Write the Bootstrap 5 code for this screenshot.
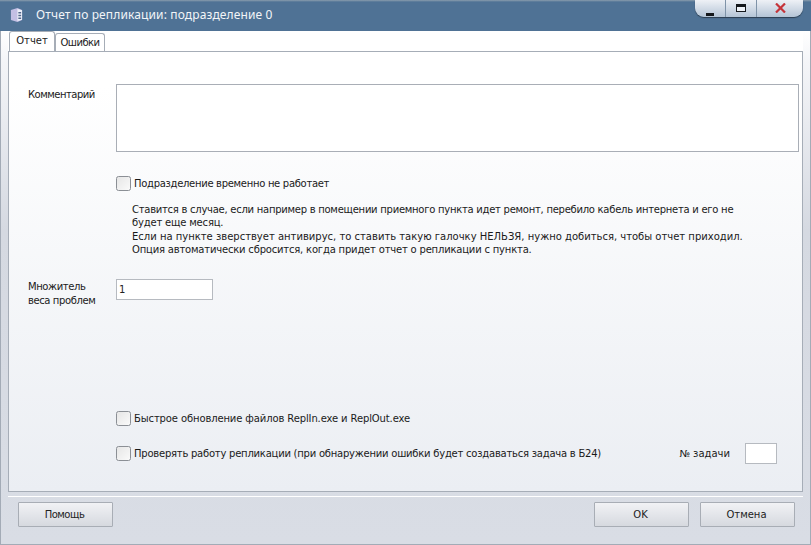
<!DOCTYPE html>
<html lang="ru">
<head>
<meta charset="utf-8">
<title>Отчет по репликации</title>
<link href="https://cdn.jsdelivr.net/npm/bootstrap@5.3.0/dist/css/bootstrap.min.css" rel="stylesheet">
<style>
html,body{height:545px;overflow:hidden}
body{font-family:"DejaVu Sans",sans-serif;font-size:10px;color:#1a1a1a;background:#d9dde5}
.win{height:545px;border:1px solid #a3abb6;display:flex;flex-direction:column;background:linear-gradient(#fff 30px,#f4f5f8 60px,#d5d9e1 230px,#d9dde5 100%)}
.tbar{height:31px;margin:-1px -1px 0;background:linear-gradient(#8a9dae 0,#4f7295 2px,#4f7295 100%);color:#f2f5f8;font-family:"Noto Sans",sans-serif;font-size:12px;letter-spacing:.13px;flex:none;padding-left:10px}
.tbar-title{margin-left:13px;margin-top:-1px}
.wctl{width:108px;height:17px;margin-right:8px;border-radius:0 0 9px 9px;background:linear-gradient(#eef1f6,#b4c4d6);box-shadow:0 1px 1px #2c3e50;overflow:hidden}
.wbtn{height:17px;border-right:1px solid #7f93a8;padding-bottom:1px}
.wbtn:last-child{border-right:0}
.wmin{width:31px}.wmax{width:31px}.wcl{width:46px}
.tabs-area{margin:0 7px;flex:none;height:21px;background:#fff}
.tabs-area.nav-tabs{border-bottom:1px solid #a6adb7;padding-left:1px}
.tabs-area .nav-link{font-size:10px;color:#222;padding:0;border:1px solid #a6adb7;border-bottom:0;border-radius:3px 3px 0 0;margin:0;background:#fff;text-align:center}
.tabs-area .nav-link.tab-on{color:#222;background:#fff;border-color:#a6adb7;padding-top:1px}
.tab-on{width:46px;height:20px;line-height:15px}
.tabs-area .tab-off{width:50px;height:18px;margin-top:2px;line-height:18px;letter-spacing:-.5px}
.pane{margin:0 7px;flex:none;height:440px;border:1px solid #a6adb7;border-top:0;background:linear-gradient(#fff 0,#fff 8%,#ebeef3 100%);padding-left:19px;padding-right:3px}
.lbl{width:88px;flex:none;line-height:14px;letter-spacing:-.4px;padding-top:1px}
.cmt{height:68px;margin-top:32px}
.cmt .lbl{padding-top:4px;letter-spacing:-.5px}
.area{height:68px;border:1px solid #a9aeb6;border-radius:0;background:#fff;resize:none;box-shadow:none;flex:1}
.chk{width:15px;height:15px;flex:none;margin:0;border:1px solid #8b8f95;border-radius:2px;background:linear-gradient(135deg,#e6e6e6,#fafafa)}
.chkrow{margin-left:88px;height:15px;gap:3px}
.c1{margin-top:24px;letter-spacing:-.3px}
.note{margin:12px 0 0 104px;line-height:13.3px;white-space:nowrap}
.n1{letter-spacing:-.26px}.n2{letter-spacing:-.18px}.n4{letter-spacing:-.19px}
.mult{margin-top:23px}
.num{width:97px;height:21px;border:1px solid #b6bac0;border-radius:0;padding:0 2px;font-size:10px;box-shadow:none;color:#222}
.c2{margin-top:103px;letter-spacing:-.12px}
.c3row{margin-top:17px;height:21px;margin-left:88px;padding-right:22px;gap:3px}
.c3lbl{letter-spacing:-.23px}
.task{width:32px;margin-left:12px}
.dbl{height:5px;margin:0 7px;flex:none;border-bottom:1px solid #fff}
.foot{padding:5px 15px 0 17px;flex:none}
.wbt{width:95px;height:25px;padding:0 2px 0 0;font-size:10px;color:#222;border:1px solid #a8adb5;border-radius:1px;background:linear-gradient(#f1f2f5,#d6d9df)}
.bgap{margin-left:11px}
.tight{letter-spacing:-.5px}
</style>
</head>
<body>
<div class="win">
  <div class="tbar d-flex align-items-start">
    <svg class="mt-2" width="13" height="14" viewBox="0 0 14 15"><path d="M1 2 8 0l5 2v11l-5 2-7-2z" fill="#c3bfe4"/><path d="M8 1v13l5-1.5V2.5z" fill="#eef0fa"/><path d="M9 5h3M9 8h3M9 11h3" stroke="#55688c" stroke-width="1.5"/></svg>
    <div class="tbar-title align-self-center">Отчет по репликации: подразделение 0</div>
    <div class="wctl ms-auto d-flex">
      <div class="wbtn wmin d-flex justify-content-center align-items-end"><svg width="8" height="7" viewBox="0 0 8 7"><rect y="4" width="8" height="3" fill="#15181c"/></svg></div>
      <div class="wbtn wmax d-flex justify-content-center align-items-center"><svg width="10" height="9" viewBox="0 0 10 9"><rect x=".5" y=".5" width="9" height="7" fill="#eef2f7" stroke="#15181c"/><rect width="10" height="3" fill="#15181c"/></svg></div>
      <div class="wbtn wcl d-flex justify-content-center align-items-center"><svg width="11" height="10" viewBox="0 0 11 10"><path d="M1 0.5 10 9.5M10 0.5 1 9.5" stroke="#c5343a" stroke-width="2.2"/></svg></div>
    </div>
  </div>
  <ul class="nav nav-tabs tabs-area">
    <li class="nav-item"><a class="nav-link active tab-on" href="#">Отчет</a></li>
    <li class="nav-item"><a class="nav-link tab-off" href="#">Ошибки</a></li>
  </ul>
  <div class="pane">
    <div class="d-flex cmt">
      <div class="lbl">Комментарий</div>
      <textarea class="form-control area"></textarea>
    </div>
    <div class="d-flex align-items-center chkrow c1">
      <input type="checkbox" class="form-check-input chk" id="a">
      <label for="a">Подразделение временно не работает</label>
    </div>
    <div class="note">
      <div class="n1">Ставится в случае, если например в помещении приемного пункта идет ремонт, перебило кабель интернета и его не</div>
      <div class="n2">будет еще месяц.</div>
      <div>Если на пункте зверствует антивирус, то ставить такую галочку НЕЛЬЗЯ, нужно добиться, чтобы отчет приходил.</div>
      <div class="n4">Опция автоматически сбросится, когда придет отчет о репликации с пункта.</div>
    </div>
    <div class="d-flex mult">
      <div class="lbl">Множитель<br>веса проблем</div>
      <input class="form-control num" value="1">
    </div>
    <div class="d-flex align-items-center chkrow c2">
      <input type="checkbox" class="form-check-input chk" id="b">
      <label for="b">Быстрое обновление файлов ReplIn.exe и ReplOut.exe</label>
    </div>
    <div class="d-flex align-items-center c3row">
      <input type="checkbox" class="form-check-input chk" id="c">
      <label class="c3lbl" for="c">Проверять работу репликации (при обнаружении ошибки будет создаваться задача в Б24)</label>
      <span class="ms-auto">№ задачи</span>
      <input class="form-control num task">
    </div>
  </div>
  <div class="dbl"></div>
  <div class="foot d-flex">
    <button class="btn wbt tight">Помощь</button>
    <button class="btn wbt ms-auto">OK</button>
    <button class="btn wbt bgap">Отмена</button>
  </div>
</div>
<script src="https://cdn.jsdelivr.net/npm/bootstrap@5.3.0/dist/js/bootstrap.bundle.min.js"></script>
</body>
</html>
